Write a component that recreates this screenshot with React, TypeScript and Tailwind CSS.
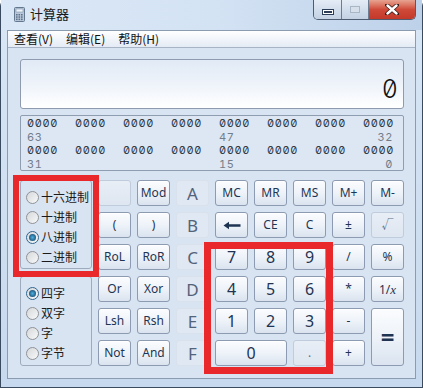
import { Fragment } from "react";

type Variant = "n" | "d" | "f";

const keys: { label: React.ReactNode; v?: Variant; size?: string; span?: string }[] = [
  { label: "", v: "d" },
  { label: "Mod" },
  { label: "A", v: "f", size: "text-[17px]" },
  { label: "MC" },
  { label: "MR" },
  { label: "MS" },
  { label: "M+" },
  { label: "M-" },

  { label: "(" },
  { label: ")" },
  { label: "B", v: "f", size: "text-[17px]" },
  { label: "arrow" },
  { label: "CE" },
  { label: "C" },
  { label: "±" },
  { label: "√", v: "d" },

  { label: "RoL" },
  { label: "RoR" },
  { label: "C", v: "f", size: "text-[17px]" },
  { label: "7", size: "text-[16px]" },
  { label: "8", size: "text-[16px]" },
  { label: "9", size: "text-[16px]" },
  { label: "/" },
  { label: "%" },

  { label: "Or" },
  { label: "Xor" },
  { label: "D", v: "f", size: "text-[17px]" },
  { label: "4", size: "text-[16px]" },
  { label: "5", size: "text-[16px]" },
  { label: "6", size: "text-[16px]" },
  { label: "*" },
  { label: "1/x" },

  { label: "Lsh" },
  { label: "Rsh" },
  { label: "E", v: "f", size: "text-[17px]" },
  { label: "1", size: "text-[16px]" },
  { label: "2", size: "text-[16px]" },
  { label: "3", size: "text-[16px]" },
  { label: "-" },
  { label: "=", size: "text-[24px] font-bold", span: "row-span-2" },

  { label: "Not" },
  { label: "And" },
  { label: "F", v: "f", size: "text-[17px]" },
  { label: "0", size: "text-[16px]", span: "col-span-2" },
  { label: ".", v: "d" },
  { label: "+" },
];

const variantClass: Record<Variant, string> = {
  n: "border-[#8c9bb1] bg-linear-to-b from-[#fbfcfe] via-[#eef3f9] to-[#dae3ef] text-[#1f3452] shadow-[inset_0_1px_0_#ffffff]",
  d: "border-[#c0ccdb] bg-linear-to-b from-[#e8eef6] to-[#dee6f1] text-[#5d6d82]",
  f: "border-[#d9e1ec] bg-[#e0e8f3] text-[#53637a]",
};

function Arrow() {
  return (
    <svg width="18" height="9" viewBox="0 0 18 9">
      <path d="M0.5 4.5 L6 0.8 L6 3.2 L17.5 3.2 L17.5 5.8 L6 5.8 L6 8.2 Z" fill="#1f3452" />
    </svg>
  );
}

function Key({ label, v = "n", size = "text-[12px]", span = "" }: (typeof keys)[number]) {
  let content: React.ReactNode = label;
  if (label === "arrow") content = <Arrow />;
  if (label === "1/x")
    content = (
      <span>
        1/<span className="font-['Liberation_Serif',serif] italic text-[13px]">x</span>
      </span>
    );
  return (
    <div
      className={`flex items-center justify-center rounded-[3px] border leading-none ${variantClass[v]} ${size} ${span}`}
    >
      {content}
    </div>
  );
}

function Radio({ label, checked = false }: { label: string; checked?: boolean }) {
  return (
    <div className="flex h-[20px] items-center gap-[2px] pl-[5px] text-[12px] text-[#1b1b1b]">
      <span
        className={`flex h-[13px] w-[13px] items-center justify-center rounded-full border ${
          checked ? "border-[#2f6690]" : "border-[#8f9296]"
        } bg-linear-to-br from-[#d6d8db] to-[#f8f8f8]`}
      >
        {checked && <span className="h-[7px] w-[7px] rounded-full bg-radial from-[#4fb0e0] to-[#0f3d60]" />}
      </span>
      <span>{label}</span>
    </div>
  );
}

function CalcIcon() {
  return (
    <svg width="11" height="15" viewBox="0 0 11 15">
      <rect x="0.5" y="0.5" width="10" height="14" rx="1" fill="#b9c8da" stroke="#63778f" />
      <rect x="2" y="2" width="7" height="3" fill="#eef4fb" stroke="#7f93aa" strokeWidth="0.6" />
      {[0, 1, 2].map((r) =>
        [0, 1, 2].map((c) => (
          <rect key={`${r}${c}`} x={2 + c * 2.5} y={7 + r * 2.3} width="1.6" height="1.5" fill="#5d7188" />
        ))
      )}
    </svg>
  );
}

function WindowControls() {
  return (
    <div className="flex h-[20px] overflow-hidden rounded-b-[5px] border border-t-0 border-[#4d5c70]">
      <div className="flex w-[28px] items-center justify-center border-r border-[#6d7c90] bg-linear-to-b from-[#e4ecf6] to-[#c2d1e3]">
        <span className="mt-[4px] h-[4px] w-[10px] border border-white bg-[#2c3e57] outline outline-1 outline-[#2c3e57]" />
      </div>
      <div className="flex w-[27px] items-center justify-center border-r border-[#6d7c90] bg-linear-to-b from-[#e4ecf6] to-[#c2d1e3]">
        <span className="h-[7px] w-[10px] border border-[#a9b6c6] bg-[#d6dfea]" />
      </div>
      <div className="flex w-[46px] items-center justify-center bg-linear-to-b from-[#e7a392] via-[#cf4a38] to-[#c3382a]">
        <svg width="14" height="11" viewBox="0 0 14 11">
          <path d="M2 1 L12 10 M12 1 L2 10" stroke="#3b1a16" strokeWidth="4" strokeLinecap="round" fill="none" />
          <path d="M2.5 1.5 L11.5 9.5 M11.5 1.5 L2.5 9.5" stroke="#ffffff" strokeWidth="2.4" strokeLinecap="round" fill="none" />
        </svg>
      </div>
    </div>
  );
}

const bitRows: [string, string, string][] = [
  ["63", "47", "32"],
  ["31", "15", "0"],
];

export default function App() {
  return (
    <div className="relative h-[388px] w-[423px] overflow-hidden font-['Noto_Sans','Noto_Sans_CJK_SC',sans-serif]">
      <div className="flex h-full flex-col rounded-t-[6px] border-x border-[#3a4b60] bg-linear-to-b from-[#d9e7f6] to-[#c7d9ee]">
        {/* Title bar */}
        <div className="flex h-[30px] items-start justify-between bg-linear-to-r from-[#dae7f6] via-[#d4e3f4] to-[#bdd1e9] pr-[6px]">
          <div className="flex h-[26px] items-center gap-[5px] pl-[13px] pt-[2px]">
            <CalcIcon />
            <span className="font-['Noto_Sans_CJK_SC',sans-serif] text-[13px] text-[#1a1a1a]">计算器</span>
          </div>
          <WindowControls />
        </div>

        {/* Client */}
        <div className="mx-[6px] border border-[#8b9bb0] bg-[#d9e4f2]">
          <div className="flex h-[17px] items-center gap-[13px] border-b border-[#a7b4c5] bg-linear-to-b from-[#ffffff] to-[#e4ebf5] pl-[6px] font-['Noto_Sans_CJK_SC',sans-serif] text-[12px] text-[#111]">
            <span>查看(V)</span>
            <span>编辑(E)</span>
            <span>帮助(H)</span>
          </div>

          <div className="flex flex-col pb-[12px] pl-[12px] pr-[11px] pt-[11px]">
            {/* Display */}
            <div className="h-[50px] rounded-[3px] border border-[#8e9bae] bg-linear-to-b from-[#e1eaf6] via-[#eef3fa] to-[#ffffff] pr-[5px] pt-[16px] text-right font-['Inter',sans-serif] text-[25px] font-light leading-[26px] tabular-nums slashed-zero text-[#111]">
              0
            </div>

            {/* Bits */}
            <div className="mt-[6px] h-[56px] overflow-hidden rounded-[2px] border border-[#8f9db1] bg-[#dde7f3] pl-[6px] pt-[1px] font-['Inter',sans-serif] text-[11px] leading-[13.5px] tracking-[0.6px] tabular-nums slashed-zero">
              {bitRows.map(([a, b, c]) => (
                <Fragment key={a}>
                  <div className="grid grid-cols-[repeat(7,48px)_30px] text-[#2e3945]">
                    {[0, 1, 2, 3, 4, 5, 6, 7].map((i) => (
                      <span key={i}>0000</span>
                    ))}
                  </div>
                  <div className="grid grid-cols-[repeat(7,48px)_30px] text-[#737d8a]">
                    <span>{a}</span>
                    <span />
                    <span />
                    <span />
                    <span>{b}</span>
                    <span />
                    <span />
                    <span className="text-right">{c}</span>
                  </div>
                </Fragment>
              ))}
            </div>

            {/* Lower */}
            <div className="mt-[9px] flex gap-[6px]">
              <div className="flex w-[72px] flex-col gap-[7px] font-['Noto_Sans_CJK_SC',sans-serif]">
                <div className="h-[89px] rounded-[3px] border border-[#9eabbd] pt-[6px]">
                  <Radio label="十六进制" />
                  <Radio label="十进制" />
                  <Radio label="八进制" checked />
                  <Radio label="二进制" />
                </div>
                <div className="h-[90px] rounded-[3px] border border-[#9eabbd] pt-[6px]">
                  <Radio label="四字" checked />
                  <Radio label="双字" />
                  <Radio label="字" />
                  <Radio label="字节" />
                </div>
              </div>

              <div className="grid grid-cols-[repeat(8,33px)] grid-rows-[repeat(6,26px)] gap-x-[6px] gap-y-[6px]">
                {keys.map((k, i) => (
                  <Key key={i} {...k} />
                ))}
              </div>
            </div>
          </div>
        </div>
        <div className="flex-1 border-b border-[#3a4b60]" />
      </div>

      {/* Annotation boxes */}
      <div className="pointer-events-none absolute left-[13px] top-[175px] h-[102px] w-[86px] border-[6px] border-[#e8282b]" />
      <div className="pointer-events-none absolute left-[204px] top-[242px] h-[132px] w-[129px] border-[7px] border-[#e8282b]" />
    </div>
  );
}
